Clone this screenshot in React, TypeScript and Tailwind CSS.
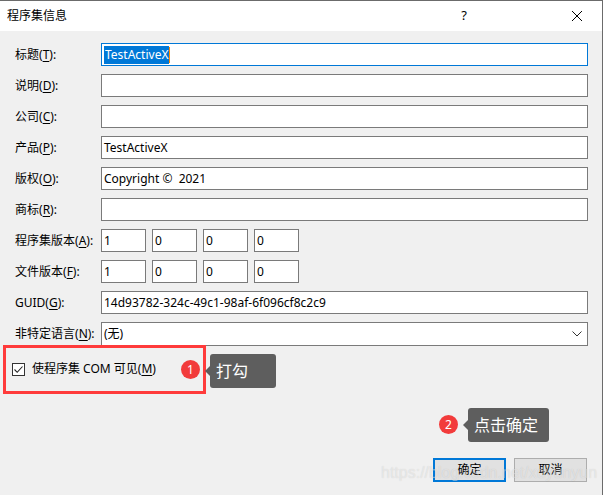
import React from "react";

const FONT = "font-['Noto_Sans','Noto_Sans_CJK_SC',sans-serif]";

function Lbl({ a, k, b }: { a: string; k: string; b?: string }) {
  return (
    <span className="w-[101px] shrink-0 pl-[15px] text-[12px] text-[#000] whitespace-nowrap">
      {a}(<span className="underline underline-offset-2">{k}</span>){b ?? ":"}
    </span>
  );
}

function Box({ children, w = "w-[487px]", focus = false }: { children?: React.ReactNode; w?: string; focus?: boolean }) {
  return (
    <div
      className={`${w} h-[23px] bg-white border ${focus ? "border-[#0078d7]" : "border-[#7a7a7a]"} flex items-center pl-[2px] text-[12px] text-black whitespace-pre overflow-hidden`}
    >
      {children}
    </div>
  );
}

function Row({ children }: { children: React.ReactNode }) {
  return <div className="flex items-center h-[23px]">{children}</div>;
}

function Tip({ text, w }: { text: string; w: string }) {
  return (
    <div className={`relative ${w} bg-[#5e5e5e] rounded-[3px] text-white text-[16px] flex items-center pl-[6px] h-[34px]`}>
      <span className="absolute left-[-5px] top-1/2 -translate-y-1/2 w-0 h-0 border-y-[5px] border-y-transparent border-r-[5px] border-r-[#5e5e5e]" />
      {text}
    </div>
  );
}

function Badge({ n }: { n: string }) {
  return (
    <div className="w-[19px] h-[19px] rounded-full bg-[#f23b3b] text-white text-[12px] flex items-center justify-center leading-none">
      {n}
    </div>
  );
}

export default function App() {
  return (
    <div className={`${FONT} relative w-[604px] h-[495px] bg-white overflow-hidden`}>
      <div className="w-[603px] h-[495px] border-t border-r border-[#6b6b6b] bg-[#f0f0f0] flex flex-col">
        {/* title bar */}
        <div className="h-[30px] bg-white flex items-center pl-[7px] pr-[15px] text-[12px] text-black shrink-0">
          <span>程序集信息</span>
          <span className="ml-auto mr-[104px] text-[13px]">?</span>
          <svg width="12" height="12" viewBox="0 0 12 12" className="mr-[4px]">
            <path d="M1 1L11 11M11 1L1 11" stroke="#000" strokeWidth="1" />
          </svg>
        </div>

        <div className="flex flex-col gap-[8px] pt-[12px]">
          <Row>
            <Lbl a="标题" k="T" />
            <Box focus>
              <span className="bg-[#0078d7] text-white px-[1px]">TestActiveX</span>
              <span className="w-[1px] h-[16px] bg-[#ff8a00]" />
            </Box>
          </Row>
          <Row>
            <Lbl a="说明" k="D" />
            <Box />
          </Row>
          <Row>
            <Lbl a="公司" k="C" />
            <Box />
          </Row>
          <Row>
            <Lbl a="产品" k="P" />
            <Box>TestActiveX</Box>
          </Row>
          <Row>
            <Lbl a="版权" k="O" />
            <Box>{"Copyright ©  2021"}</Box>
          </Row>
          <Row>
            <Lbl a="商标" k="R" />
            <Box />
          </Row>
          <Row>
            <Lbl a="程序集版本" k="A" />
            <div className="flex gap-[6px]">
              <Box w="w-[45px]">1</Box>
              <Box w="w-[45px]">0</Box>
              <Box w="w-[45px]">0</Box>
              <Box w="w-[45px]">0</Box>
            </div>
          </Row>
          <Row>
            <Lbl a="文件版本" k="F" />
            <div className="flex gap-[6px]">
              <Box w="w-[45px]">1</Box>
              <Box w="w-[45px]">0</Box>
              <Box w="w-[45px]">0</Box>
              <Box w="w-[45px]">0</Box>
            </div>
          </Row>
          <Row>
            <Lbl a="GUID" k="G" />
            <Box>14d93782-324c-49c1-98af-6f096cf8c2c9</Box>
          </Row>
          <div className="flex items-center h-[24px]">
            <Lbl a="非特定语言" k="N" />
            <div className="w-[487px] h-[24px] bg-white border border-[#7a7a7a] flex items-center pl-[2px] pr-[5px] text-[12px] text-black">
              <span>(无)</span>
              <svg width="10" height="6" viewBox="0 0 10 6" className="ml-auto">
                <path d="M0.5 0.5L5 5L9.5 0.5" fill="none" stroke="#333" strokeWidth="1" />
              </svg>
            </div>
          </div>
        </div>

        {/* checkbox row */}
        <div className="flex items-center h-[16px] mt-[15px] pl-[12px] text-[12px] text-black">
          <div className="w-[13px] h-[13px] border border-[#333] bg-white flex items-center justify-center">
            <svg width="11" height="11" viewBox="0 0 11 11">
              <path d="M1.5 5.5L4.2 8.3L9.5 2.5" fill="none" stroke="#222" strokeWidth="1.1" />
            </svg>
          </div>
          <span className="ml-[7px]">
            使程序集 COM 可见(<span className="underline underline-offset-2">M</span>)
          </span>
        </div>

        {/* buttons */}
        <div className="flex justify-end gap-[8px] pr-[15px] mt-[81px]">
          <button className="w-[73px] h-[24px] bg-[#e1e1e1] border-2 border-[#0078d7] text-[12px] text-black flex items-center justify-center">
            确定
          </button>
          <button className="w-[73px] h-[24px] bg-[#e1e1e1] border border-[#adadad] text-[12px] text-black flex items-center justify-center">
            取消
          </button>
        </div>
      </div>

      {/* annotations */}
      <div className="absolute left-[3px] top-[345px] w-[203px] h-[49px] border-[3px] border-[#ff3b3b]" />
      <div className="absolute left-[181px] top-[360px]">
        <Badge n="1" />
      </div>
      <div className="absolute left-[210px] top-[354px]">
        <Tip text="打勾" w="w-[66px]" />
      </div>
      <div className="absolute left-[439px] top-[415px]">
        <Badge n="2" />
      </div>
      <div className="absolute left-[468px] top-[408px]">
        <Tip text="点击确定" w="w-[81px]" />
      </div>
      <div className="absolute left-[381px] top-[461px] text-[16px] font-['Liberation_Sans',sans-serif] text-white/45 [text-shadow:0_0_1px_rgba(0,0,0,0.15)] whitespace-nowrap">
        https://blog.csdn.net/xdyunyun
      </div>
    </div>
  );
}
